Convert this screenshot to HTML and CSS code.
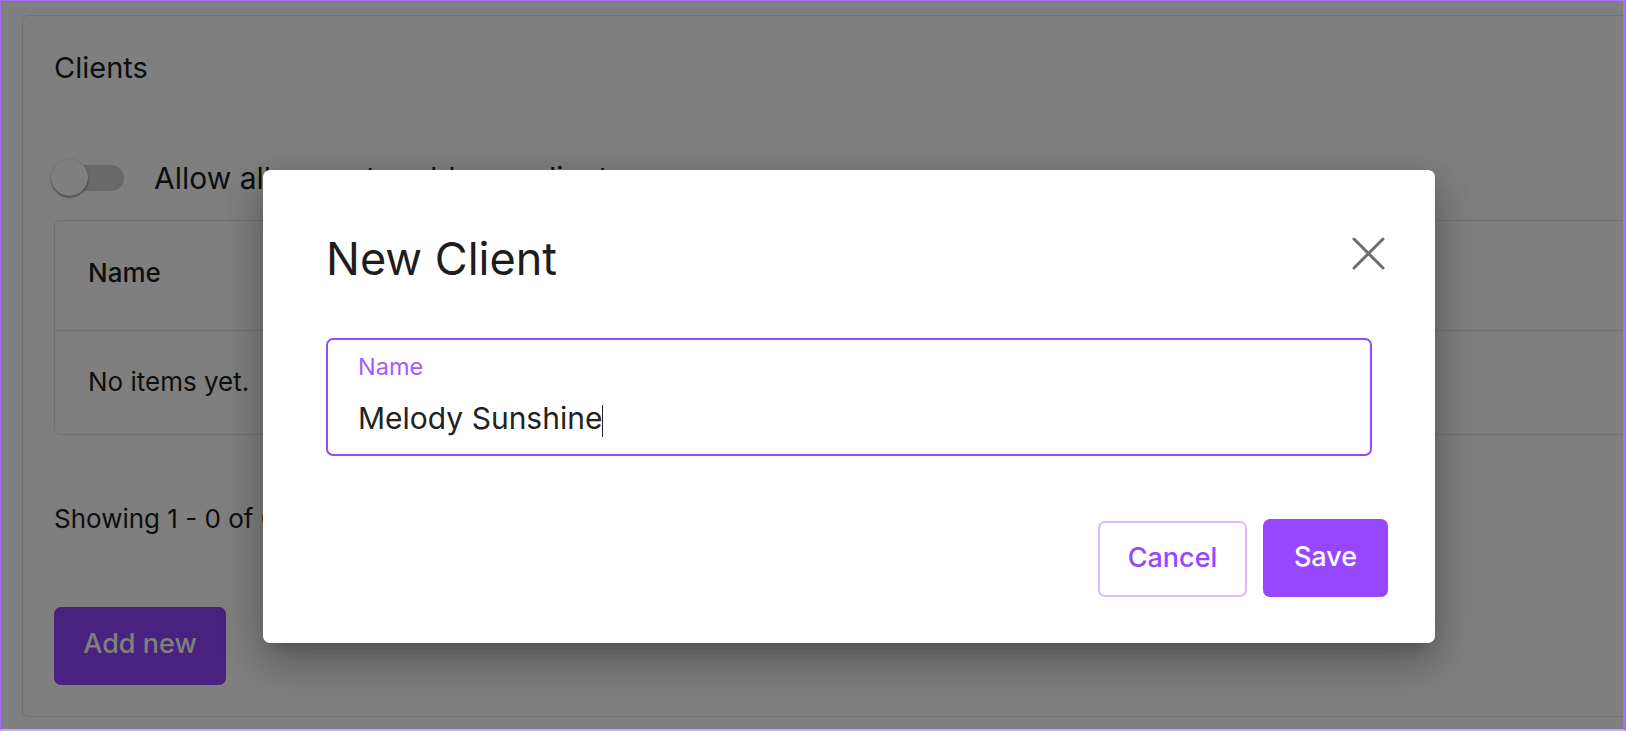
FILE: index.html
```
<!DOCTYPE html>
<html lang="en">
<head>
<meta charset="utf-8">
<title>Clients</title>
<link rel="stylesheet" href="styles.css">
</head>
<body>
<div class="frame">
  <section class="card">
    <h2 class="card-title">Clients</h2>
    <div class="toggle-row">
      <span class="switch"><span class="switch-track"></span><span class="switch-thumb"></span></span>
      <span class="toggle-label">Allow all users to add new clients</span>
    </div>
    <div class="table">
      <div class="table-head">Name</div>
      <div class="table-row">No items yet.</div>
    </div>
    <p class="showing">Showing 1 - 0 of 0</p>
    <button class="btn-add">Add new</button>
  </section>

  <div class="overlay"></div>

  <div class="modal" role="dialog">
    <div class="modal-head">
      <h1 class="modal-title">New Client</h1>
      <button class="close" aria-label="Close">
        <svg width="33" height="33" viewBox="0 0 33 33"><path d="M2 2 L31 31 M31 2 L2 31" stroke="#6e6e6e" stroke-width="3" stroke-linecap="round" fill="none"/></svg>
      </button>
    </div>
    <div class="field">
      <div class="field-label">Name</div>
      <div class="field-value">Melody Sunshine<span class="caret"></span></div>
    </div>
    <div class="actions">
      <button class="btn-cancel">Cancel</button>
      <button class="btn-save">Save</button>
    </div>
  </div>
</div>
</body>
</html>
```
FILE: styles.css
```
* { box-sizing: border-box; }
html, body { margin: 0; padding: 0; }
body {
  width: 1626px;
  height: 731px;
  font-family: "Inter", "Liberation Sans", sans-serif;
  background: #fff;
  overflow: hidden;
}
.frame {
  position: relative;
  width: 1626px;
  height: 731px;
  border: 1px solid #a66dff;
  border-right-width: 3px;
  border-bottom: 2px solid #c9a8ff;
  overflow: hidden;
  padding-top: 14px;
  padding-left: 21px;
}
.card {
  width: 1660px;
  height: 702px;
  border: 1px solid #e4e4e4;
  border-radius: 6px;
  padding: 34px 31px 0 31px;
  background: #fff;
  color: #1c1c1c;
}
.card-title {
  margin: 0;
  font-size: 29px;
  line-height: 36px;
  font-weight: 400;
}
.toggle-row {
  display: flex;
  align-items: center;
  height: 40px;
  margin-top: 72px;
}
.switch {
  position: relative;
  width: 76px;
  height: 40px;
  margin-left: -4px;
  flex: none;
}
.switch-track {
  position: absolute;
  left: 12px;
  top: 7px;
  width: 62px;
  height: 26px;
  border-radius: 13px;
  background: #d2d2d2;
}
.switch-thumb {
  position: absolute;
  left: 1px;
  top: 1px;
  width: 37px;
  height: 37px;
  border-radius: 50%;
  background: #fff;
  box-shadow: 0 2px 2px rgba(0,0,0,0.35), 0 0 1px rgba(0,0,0,0.3);
}
.toggle-label {
  margin-left: 28px;
  font-size: 30px;
  line-height: 40px;
  white-space: nowrap;
}
.table {
  margin-top: 22px;
  border: 1px solid #e2e2e2;
  border-radius: 6px;
}
.table-head {
  padding: 36px 33px 41px;
  font-size: 26px;
  line-height: 32px;
  font-weight: 500;
  border-bottom: 1px solid #e2e2e2;
}
.table-row {
  padding: 35px 33px 36px;
  font-size: 26px;
  line-height: 32px;
}
.showing {
  margin: 68px 0 0;
  font-size: 26px;
  line-height: 32px;
}
.btn-add {
  display: block;
  margin-top: 72px;
  width: 172px;
  height: 78px;
  padding: 0 0 5px;
  border: 0;
  border-radius: 7px;
  background: #9343ff;
  color: #fff;
  font-family: inherit;
  font-size: 27px;
  font-weight: 500;
}
.overlay {
  position: absolute;
  inset: 0;
  background: rgba(0,0,0,0.5);
}
.modal {
  position: absolute;
  left: 262px;
  top: 169px;
  width: 1172px;
  background: #fff;
  border-radius: 7px;
  padding: 63px 63px 46px 63px;
  box-shadow: 0 11px 15px -7px rgba(0,0,0,0.2), 0 24px 38px 3px rgba(0,0,0,0.14), 0 9px 46px 8px rgba(0,0,0,0.12);
}
.modal-head {
  display: flex;
  justify-content: space-between;
  align-items: flex-start;
}
.modal-title {
  margin: 0;
  font-size: 45px;
  line-height: 52px;
  font-weight: 400;
  color: #1d1d1d;
}
.close {
  margin-top: 4px;
  margin-right: -13px;
  width: 33px;
  height: 33px;
  padding: 0;
  border: 0;
  background: none;
  display: block;
}
.close svg { display: block; }
.field {
  margin-top: 53px;
  height: 118px;
  border: 2px solid #9747ff;
  border-radius: 7px;
  padding: 13px 30px 0;
}
.field-label {
  font-size: 23.5px;
  line-height: 28px;
  color: #a35bff;
}
.field-value {
  margin-top: 19px;
  font-size: 30px;
  line-height: 36px;
  color: #222;
}
.caret {
  display: inline-block;
  width: 1px;
  height: 32px;
  background: #222;
  vertical-align: -8px;
}
.actions {
  display: flex;
  justify-content: flex-end;
  align-items: flex-end;
  gap: 16px;
  margin-top: 63px;
  margin-right: -16px;
}
.btn-cancel, .btn-save {
  height: 78px;
  border-radius: 7px;
  font-family: inherit;
  font-size: 27px;
  font-weight: 500;
  padding: 0 0 3px;
}
.btn-cancel {
  width: 149px;
  height: 76px;
  background: #fff;
  border: 2px solid #d8bcff;
  color: #9747ff;
}
.btn-save {
  width: 125px;
  background: #9747ff;
  border: 0;
  color: #fff;
}
```
